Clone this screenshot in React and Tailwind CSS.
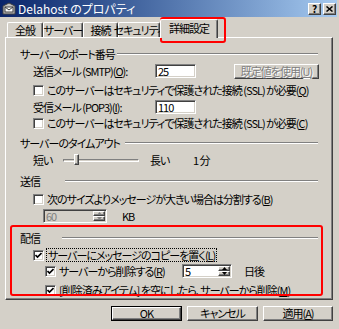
import React from 'react'

const raised =
  'border border-t-white border-l-white border-r-[#404040] border-b-[#404040] shadow-[inset_-1px_-1px_0_#808080]'
const sunken =
  'border border-t-[#808080] border-l-[#808080] border-r-white border-b-white shadow-[inset_1px_1px_0_#404040,inset_-1px_-1px_0_#d4d0c8]'
const disabledText = 'text-[#808080] [text-shadow:1px_1px_0_#fff]'

function Check({ checked }) {
  return (
    <div className={`w-[11px] h-[11px] shrink-0 bg-white ${sunken} flex items-center justify-center`}>
      {checked && (
        <svg width="7" height="7" viewBox="0 0 7 7">
          <path d="M0.5 3 L2.5 5 L6.5 1" fill="none" stroke="#000" strokeWidth="1.6" />
        </svg>
      )}
    </div>
  )
}

function CheckRow({ checked, x = 33, mt, children }) {
  return (
    <div className="flex items-center h-[16px] gap-[3px]" style={{ marginTop: mt, paddingLeft: x - 6 }}>
      <Check checked={checked} />
      <span className="whitespace-nowrap">{children}</span>
    </div>
  )
}

function Group({ label, lineX, mt }) {
  return (
    <div className="flex items-center h-[16px] pl-[14px] pr-[14px]" style={{ marginTop: mt }}>
      <span className="whitespace-nowrap shrink-0" style={{ width: lineX - 20 }}>{label}</span>
      <div className="flex-1 h-[2px] border-t border-t-[#808080] border-b border-b-white" />
    </div>
  )
}

function Arrow({ up, disabled }) {
  return (
    <div className={`flex-1 bg-[#d4d0c8] ${raised} flex items-center justify-center`}>
      <svg width="5" height="3" viewBox="0 0 5 3">
        <path d={up ? 'M2.5 0 L5 3 L0 3 Z' : 'M0 0 L5 0 L2.5 3 Z'} fill={disabled ? '#808080' : '#000'} />
      </svg>
    </div>
  )
}

function Spinner({ value, width, disabled }) {
  return (
    <div className={`flex h-[14px] shrink-0 ${sunken} ${disabled ? 'bg-[#d4d0c8]' : 'bg-white'}`} style={{ width }}>
      <span className={`flex-1 flex items-center pl-[2px] ${disabled ? 'text-[#808080]' : ''}`}>{value}</span>
      <div className="w-[14px] flex flex-col p-px">
        <Arrow up disabled={disabled} />
        <Arrow disabled={disabled} />
      </div>
    </div>
  )
}

function Field({ value }) {
  return (
    <div className={`w-[41px] h-[14px] shrink-0 bg-white ${sunken} flex items-center pl-[2px]`}>{value}</div>
  )
}

function Button({ children, def, width }) {
  return (
    <div className={`h-[15px] shrink-0 ${def ? 'border border-black' : ''}`} style={{ width }}>
      <div className={`h-full bg-[#d4d0c8] ${raised} flex items-center justify-center whitespace-nowrap`}>
        {children}
      </div>
    </div>
  )
}

function TitleBar() {
  return (
    <div className="h-[17px] mr-[2px] flex items-center pl-[2px] pr-[1px] bg-linear-to-r from-[#0a246a] to-[#a6caf0]">
      <svg width="14" height="13" viewBox="0 0 14 13" className="shrink-0">
        <path d="M1 4 L7 1 L13 4 L13 12 L1 12 Z" fill="#c0c0c0" stroke="#404040" />
        <rect x="3" y="5" width="8" height="5" fill="#fff" stroke="#404040" />
        <path d="M3 5 L7 8 L11 5" fill="none" stroke="#404040" />
      </svg>
      <span className="ml-[2px] text-white text-[12px] tracking-normal whitespace-nowrap">Delahost のプロパティ</span>
      <div className="flex-1" />
      <div className={`w-[13px] h-[12px] bg-[#d4d0c8] ${raised} flex items-center justify-center text-[10px] font-bold tracking-normal`}>?</div>
      <div className={`ml-[2px] w-[13px] h-[12px] bg-[#d4d0c8] ${raised} flex items-center justify-center`}>
        <svg width="7" height="6" viewBox="0 0 7 6">
          <path d="M0.5 0.5 L6.5 5.5 M6.5 0.5 L0.5 5.5" stroke="#000" strokeWidth="1.5" />
        </svg>
      </div>
    </div>
  )
}

const tabs = [
  { name: '全般', w: 36 },
  { name: 'サーバー', w: 40 },
  { name: '接続', w: 35 },
  { name: 'セキュリティ', w: 42 },
]

function Tabs() {
  return (
    <div className="flex items-end h-[20px] pl-[7px]">
      {tabs.map((t) => (
        <div
          key={t.name}
          className="h-[15px] flex items-center justify-center border-t border-l border-t-white border-l-white border-r-[#404040] border-r shadow-[inset_-1px_0_0_#808080] rounded-t-[2px] whitespace-nowrap"
          style={{ width: t.w }}
        >
          {t.name}
        </div>
      ))}
      <div className="relative z-10 -mb-px w-[58px] h-[19px] bg-[#d4d0c8] flex items-center justify-center border-t border-l border-t-white border-l-white border-r border-r-[#404040] shadow-[inset_-1px_0_0_#808080] rounded-t-[2px] whitespace-nowrap pb-[2px]">
        詳細設定
      </div>
    </div>
  )
}

function Pane() {
  return (
    <div className={`ml-[5px] w-[328px] h-[263px] ${raised} flex flex-col`}>
      <Group label="サーバーのポート番号" lineX={117} mt={8} />
      <div className="flex items-center h-[16px] pl-[27px] mt-px">
        <span className="w-[122px] whitespace-nowrap">送信メール (SMTP)(<u>O</u>):</span>
        <Field value="25" />
        <div className="ml-[38px]">
          <Button width={85}>
            <span className={disabledText}>既定値を使用(<u>U</u>)</span>
          </Button>
        </div>
      </div>
      <CheckRow mt={3}>このサーバーはセキュリティで保護された接続 (SSL) が必要(<u>Q</u>)</CheckRow>
      <div className="flex items-center h-[16px] pl-[27px] mt-px">
        <span className="w-[122px] whitespace-nowrap">受信メール (POP3)(<u>I</u>):</span>
        <Field value="110" />
      </div>
      <CheckRow mt={0}>このサーバーはセキュリティで保護された接続 (SSL) が必要(<u>C</u>)</CheckRow>

      <Group label="サーバーのタイムアウト" lineX={125} mt={4} />
      <div className="flex items-center h-[16px] pl-[27px] mt-px">
        <span className="w-[30px]">短い</span>
        <div className="relative w-[76px] h-[12px] flex items-center">
          <div className="w-full h-[3px] border-t border-l border-t-[#808080] border-l-[#808080] border-b border-r border-b-white border-r-white" />
          <div className={`absolute left-[11px] top-0 w-[5px] h-[11px] bg-[#d4d0c8] ${raised}`} />
        </div>
        <span className="ml-[11px] w-[43px]">長い</span>
        <span>1 分</span>
      </div>

      <Group label="送信" lineX={65} mt={5} />
      <CheckRow mt={2}>次のサイズよりメッセージが大きい場合は分割する(<u>B</u>)</CheckRow>
      <div className="flex items-center h-[16px] pl-[37px] mt-px">
        <Spinner value="60" width={64} disabled />
        <span className="ml-[15px]">KB</span>
      </div>

      <Group label="配信" lineX={62} mt={6} />
      <div className="flex items-center h-[16px] pl-[27px] mt-px gap-[2px]">
        <Check checked />
        <span className="whitespace-nowrap border border-dotted border-black px-px leading-[12px]">
          サーバーにメッセージのコピーを置く(<u>L</u>)
        </span>
      </div>
      <div className="flex items-center h-[16px] pl-[39px] gap-[3px]">
        <Check checked />
        <span className="w-[120px] whitespace-nowrap">サーバーから削除する(<u>R</u>)</span>
        <Spinner value="5" width={50} />
        <span className="ml-[9px]">日後</span>
      </div>
      <CheckRow x={45} mt={3} checked>
        [削除済みアイテム] を空にしたら、サーバーから削除(<u>M</u>)
      </CheckRow>
    </div>
  )
}

export default function App() {
  return (
    <div className="relative w-[339px] h-[329px] bg-[#d4d0c8] overflow-hidden text-[11px] tracking-[-1px] leading-none text-black font-['Noto_Sans_CJK_JP','Noto_Sans',sans-serif] [font-feature-settings:'palt']">
      <TitleBar />
      <Tabs />
      <Pane />
      <div className="flex justify-end gap-[5px] pr-[6px] mt-[6px]">
        <Button def width={71}>OK</Button>
        <Button width={71}>キャンセル</Button>
        <Button width={70}>適用(<u>A</u>)</Button>
      </div>

      {/* red annotation frames */}
      <div className="absolute left-[160px] top-[17px] w-[66px] h-[26px] border-2 border-[#f00] rounded-[3px]" />
      <div className="absolute left-[10px] top-[225px] w-[313px] h-[71px] border-2 border-[#f00] rounded-[3px]" />
    </div>
  )
}
